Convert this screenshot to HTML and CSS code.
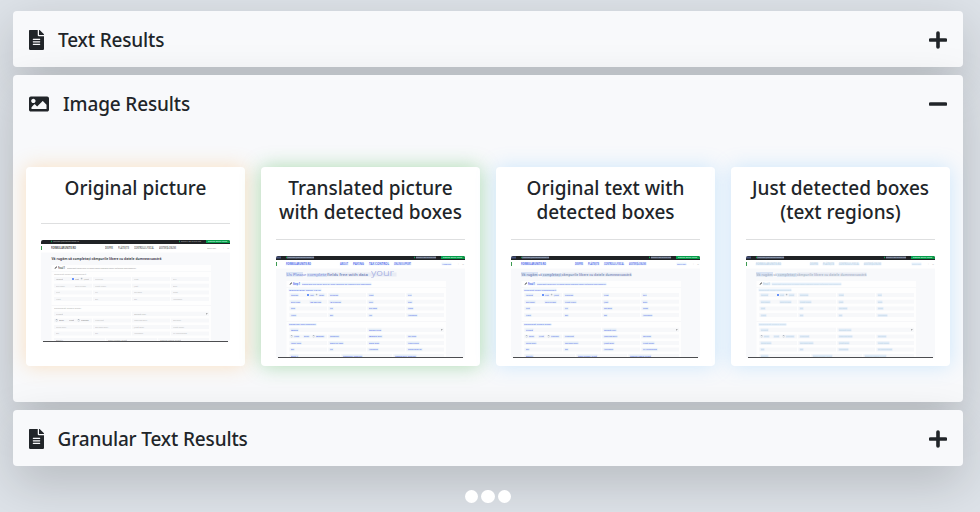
FILE: index.html
```html
<!DOCTYPE html>
<html lang="en">
<head>
<meta charset="utf-8">
<title>Results</title>
<link rel="stylesheet" href="styles.css">
</head>
<body>
<svg class="defs" aria-hidden="true">
  <symbol id="file" viewBox="0 0 384 512"><path d="M224 136V0H24C10.700 0 0 10.700 0 24v464c0 13.300 10.700 24 24 24h336c13.300 0 24-10.700 24-24V160H248c-13.200 0-24-10.800-24-24zm64 236c0 6.600-5.400 12-12 12H108c-6.600 0-12-5.400-12-12v-8c0-6.600 5.400-12 12-12h168c6.600 0 12 5.400 12 12zm0-64c0 6.600-5.400 12-12 12H108c-6.600 0-12-5.400-12-12v-8c0-6.600 5.400-12 12-12h168c6.600 0 12 5.400 12 12zm0-72v8c0 6.600-5.400 12-12 12H108c-6.600 0-12-5.400-12-12v-8c0-6.600 5.400-12 12-12h168c6.600 0 12 5.400 12 12zm96-114v6H256V0h6c6.400 0 12.500 2.500 17 7l98 98c4.500 4.500 7 10.600 7 17z"/></symbol>
  <symbol id="image" viewBox="0 0 512 512"><path d="M464 448H48c-26.500 0-48-21.500-48-48V112c0-26.500 21.500-48 48-48h416c26.500 0 48 21.500 48 48v288c0 26.500-21.500 48-48 48zM112 120c-30.900 0-56 25.100-56 56s25.100 56 56 56 56-25.100 56-56-25.100-56-56-56zM64 384h384V272l-87.500-87.500c-4.700-4.700-12.300-4.700-17 0L208 320l-55.500-55.500c-4.700-4.700-12.300-4.700-17 0L64 336z"/></symbol>
  <symbol id="plus" viewBox="0 0 18 18"><path d="M9 2v14M1.500 9h15"/></symbol>
  <symbol id="minus" viewBox="0 0 18 18"><path d="M1.500 9h15"/></symbol>
</svg>
<main class="results">
  <section class="panel">
    <header class="panel-head"><svg class="icon-file"><use href="#file"/></svg><h2 class="panel-title t-text">Text Results</h2><svg class="toggle"><use href="#plus"/></svg></header>
  </section>
  <section class="panel panel-open">
    <header class="panel-head"><svg class="icon-image"><use href="#image"/></svg><h2 class="panel-title t-image">Image Results</h2><svg class="toggle"><use href="#minus"/></svg></header>
    <div class="cards">
      <article class="card orange"><h3 class="card-title">Original picture</h3><hr><svg class="thumb" viewBox="0 0 189 102" data-kind="plain"></svg></article>
      <article class="card green"><h3 class="card-title">Translated picture<br>with detected boxes</h3><hr><svg class="thumb" viewBox="0 0 189 102" data-kind="translated"></svg></article>
      <article class="card blue"><h3 class="card-title">Original text with<br>detected boxes</h3><hr><svg class="thumb" viewBox="0 0 189 102" data-kind="original"></svg></article>
      <article class="card blue"><h3 class="card-title">Just detected boxes<br>(text regions)</h3><hr><svg class="thumb" viewBox="0 0 189 102" data-kind="boxes"></svg></article>
    </div>
  </section>
  <section class="panel">
    <header class="panel-head"><svg class="icon-file"><use href="#file"/></svg><h2 class="panel-title t-granular">Granular Text Results</h2><svg class="toggle"><use href="#plus"/></svg></header>
  </section>
</main>
<div class="dots"><i></i><i></i><i></i></div>
<script src="thumbs.js"></script>
</body>
</html>
```
FILE: styles.css
```css
* { box-sizing: border-box; }
body {
  margin: 0;
  height: 512px;
  overflow: hidden;
  padding: 11px 17px 0 13px;
  background: #dde2e8;
  color: #212529;
  font-family: "Noto Sans", "Open Sans", sans-serif;
}
.defs { position: absolute; width: 0; height: 0; }
.results { display: flex; flex-direction: column; gap: 8px; }
.panel {
  height: 56px;
  border-radius: 4px;
  background: #f8f9fb;
  box-shadow: 0 16px 48px rgba(0, 0, 0, .175);
}
.panel-open { height: 327px; }
.panel-head { display: flex; align-items: center; height: 56px; padding: 1px 16px 0; }
.panel-title { margin: 0; font-size: 19px; font-weight: 500; line-height: 24px; white-space: nowrap; padding-top: 1px; letter-spacing: -.15px; }
.t-text { margin-left: 14px; }
.t-image { margin-left: 14px; }
.t-granular { margin-left: 13.500px; }
.icon-file { width: 15px; height: 20px; fill: currentColor; }
.icon-image { width: 20px; height: 20px; fill: currentColor; }
.toggle { width: 18px; height: 18px; margin-left: auto; stroke: currentColor; stroke-width: 3.6; stroke-linecap: round; }
.cards { display: grid; grid-template-columns: repeat(4, 219px); gap: 16px; padding: 36px 13px 0; }
.card { height: 199px; padding: 9px 15px 8px; border-radius: 4px; background: #fff; }
.orange { box-shadow: 0 0 20px rgba(255, 165, 60, .3); }
.green { box-shadow: 0 0 20px rgba(40, 167, 50, .36); }
.blue { box-shadow: 0 0 20px rgba(80, 180, 255, .25); }
.card-title { min-height: 32px; margin: 0 -12px; font-size: 19px; font-weight: 500; line-height: 24px; text-align: center; white-space: nowrap; }
.card hr { height: 1px; margin: 15px 0 16px; border: 0; background: #dedfe0; }
.thumb { display: block; width: 189px; height: 102px; border-radius: 2px; }
.dots { display: flex; justify-content: center; gap: 3px; margin-top: 23.500px; }
.dots i { width: 13.400px; height: 13.400px; border-radius: 50%; background: #fff; }
```
FILE: thumbs.js
```js
const NS = 'http://www.w3.org/2000/svg';

// Each label: x, vertical centre, width, text, translated text, font size, weight, colour
const labels = [
  [10, 8, 25, 'FORMULARUNITE.RO', 'FORMULARUNITE.RO', 2.5, 700, '#222'],
  [64, 8, 8, 'DESPRE', 'ABOUT', 2.5, 600, '#444'],
  [77, 8, 11, 'PLĂTEȘTE', 'PAYING', 2.5, 600, '#555'],
  [93, 8, 20, 'CONTROLUL FISCAL', 'TAX CONTROL', 2.5, 600, '#444'],
  [118, 8, 17, 'ASISTENȚĂ ONLINE', 'ONLINE SUPPORT', 2.5, 600, '#444'],
  [166, 8, 9, 'Contul meu', 'Account', 2.3, 400, '#777'],
  [17, 28, 7, 'Pasul 1', 'Step 1', 2.6, 700, '#333'],
  [26, 28, 69, 'Completați formularul cu toate datele necesare pentru obținerea documentului', 'Complete the form with all data needed for getting the document', 2.3, 400, '#777'],
  [13, 34, 32, 'Completați datele dumneavoastră', 'Complete data your', 2.3, 400, '#999'],
  [13, 68.500, 27, 'Completați datele firmei', 'Complete data company', 2.3, 400, '#999'],
  [15, 39, 7, 'Persoană', 'Person', 2, 400, '#777'],
  [34, 39, 4, 'Fizică', 'Ind.', 2, 400, '#555'],
  [43, 39, 5, 'Juridică', 'Legal', 2, 400, '#777'],
  [54, 39, 8, 'Prenume', 'Surname', 2, 400, '#aaa'],
  [93, 39, 4.500, 'Nume', 'Name', 2, 400, '#aaa'],
  [132, 39, 3.500, 'CNP', 'PIN', 2, 400, '#aaa'],
  [15, 46, 9, 'Data nașterii', 'Birth date', 2, 400, '#aaa'],
  [34, 46, 11, 'Serie buletin', 'ID series', 2, 400, '#aaa'],
  [54, 46, 11, 'Număr buletin', 'ID number', 2, 400, '#aaa'],
  [93, 46, 4, 'Județ', 'County', 2, 400, '#aaa'],
  [132, 46, 4, 'Oraș', 'City', 2, 400, '#aaa'],
  [15, 52.500, 4, 'Stradă', 'Street', 2, 400, '#aaa'],
  [54, 52.500, 3, 'Nr.', 'No.', 2, 400, '#aaa'],
  [93, 52.500, 8, 'Cod poștal', 'Zip code', 2, 400, '#aaa'],
  [132, 52.500, 5, 'Telefon', 'Phone', 2, 400, '#aaa'],
  [15, 59.500, 5, 'Număr', 'Number', 2, 400, '#aaa'],
  [54, 59.500, 3, 'Bloc', 'Bloc', 2, 400, '#aaa'],
  [93, 59.500, 3, 'Etaj', 'Floor', 2, 400, '#aaa'],
  [132, 59.500, 9, 'Apartament', 'Apartment', 2, 400, '#aaa'],
  [15, 74, 7, 'Firmă', 'Office', 2, 400, '#999'],
  [93, 74, 12, 'Selectați tipul', 'Select type', 2, 400, '#999'],
  [18, 80.500, 5, 'Sediu', 'Head', 2, 400, '#555'],
  [28, 80.500, 5, 'Filială', 'Branch', 2, 400, '#555'],
  [40, 80.500, 8, 'Proprietar', 'Owner', 2, 400, '#555'],
  [54, 80.500, 9, 'Nume firmă', 'Company', 2, 400, '#aaa'],
  [93, 80.500, 13, 'Localitate sediu', 'Office city', 2, 400, '#aaa'],
  [132, 80.500, 8, 'Cod fiscal', 'Tax code', 2, 400, '#aaa'],
  [15, 87, 10, 'Strada sediu', 'Main road', 2, 400, '#aaa'],
  [54, 87, 13, 'Cod poștal sediu', 'Office zip code', 2, 400, '#aaa'],
  [93, 87, 10, 'Județ sediu', 'Office state', 2, 400, '#aaa'],
  [132, 87, 11, 'Număr telefon', 'Phone number', 2, 400, '#aaa'],
  [15, 93.500, 3, 'Bloc', 'Bloc', 2, 400, '#aaa'],
  [54, 93.500, 3, 'Etaj', 'No.', 2, 400, '#aaa'],
  [93, 93.500, 9, 'Apartament', 'Apartment', 2, 400, '#aaa'],
  [132, 93.500, 14, 'Nr. înregistrare', 'Registration no.', 2, 400, '#aaa'],
  [15, 100, 7, 'Bancă *', 'Bank *', 2, 400, '#777'],
  [67, 100, 19, 'Cont bancar firmă', 'Company account', 2, 400, '#888'],
  [119, 100, 21, 'Capital social firmă', 'Company capital', 2, 400, '#888']
];

document.querySelectorAll('.thumb').forEach(svg => {
  const kind = svg.dataset.kind;
  const boxed = kind !== 'plain';
  const inked = kind === 'translated' || kind === 'original';
  const add = (name, attrs, text) => {
    const el = document.createElementNS(NS, name);
    for (const key in attrs) el.setAttribute(key, attrs[key]);
    if (text) el.textContent = text;
    svg.append(el);
  };
  const rect = (x, y, width, height, fill, opacity = 1) => add('rect', { x, y, width, height, fill, opacity });
  const write = (x, y, w, text, size, weight, fill, opacity = 1) => add('text', {
    x, y: y + size * .36, textLength: w, lengthAdjust: 'spacingAndGlyphs',
    'font-size': size, 'font-weight': weight, fill, opacity
  }, text);

  rect(0, 0, 189, 102, '#f8f9fb');
  rect(0, 4, 189, 8.500, '#fff');
  rect(0, 0, 189, 4, '#202225');
  rect(165, 0, 24, 3, '#079c4a');
  rect(0, 6, 1, 4, '#3c9a51');
  rect(10, .7, 1, 1.500, '#16a052');
  rect(138, .7, 1, 1.500, '#16a052');
  write(12, 1.600, 26, 'contact@formularunite.ro', 2.2, 400, '#bbb');
  write(140, 1.600, 20, 'Suport: 0312 345 678', 2.2, 400, '#bbb');
  write(167, 1.600, 19, 'Depune online acum', 2.2, 600, '#d6ffe6');
  if (boxed) {
    rect(0, .5, 5, 2, '#7f9cff', .4);
    rect(11, .5, 27, 2, '#a9bfe8', .55);
    rect(140, .5, 20, 2, '#a9bfe8', .5);
  }
  write(182, 8, 1, '♡', 2, 400, '#999');
  write(186, 8, 2, '⌕', 2, 400, '#999');

  rect(10.500, 25, 159.500, 77, '#fefefe');
  rect(10.500, 31, 159.500, .4, '#f0f1f4');
  rect(10.500, 65.500, 159.500, .5, '#f0f1f4');
  for (const y of [37, 43.700, 50.400, 57, 78.500, 85, 91.600])
    for (const x of [13, 52, 91, 130]) rect(x, y, 38, 4, '#f7f8fa');
  for (const x of [13, 91]) rect(x, 71.700, 77, 4.200, '#f7f8fa');
  for (const x of [13, 65, 117]) rect(x, 98, 51, 4, '#f7f8fa');

  if (boxed) {
    rect(10, 16, 17, 4.500, '#a9c3ea', .4);
    rect(31, 17, 20, 4, '#a9c3ea', .32);
    rect(51, 16.500, 69.500, 4, '#b8c9e4', .25);
  }
  if (kind === 'translated') {
    write(10.500, 19, 40, 'Us Please complete', 4, 400, '#4450c8', .7);
    write(51, 18.500, 41, 'fields free with data', 4, 600, '#5264a6', .75);
    write(95, 17, 23, 'your', 8.500, 300, '#8792d8', .75);
  } else {
    write(10.500, 18.500, 110, 'Vă rugăm să completați câmpurile libere cu datele dumneavoastră', 3.900, 700,
      kind === 'plain' ? '#30323d' : kind === 'original' ? '#6476a9' : '#9caabd', kind === 'plain' ? .9 : .7);
  }

  add('path', { d: 'M13.500 29l.5-1.200 1.700-1.500.5.6-1.600 1.500z', fill: '#555' });
  for (const [x, y, w, ro, en, size, weight, color] of labels) {
    if (boxed) rect(x - .4, y - 1.300, w + .8, 2.600, '#a5cdf2', inked ? .24 : .3);
    const fill = inked ? '#3149e8' : boxed ? '#a5bed6' : color;
    write(x, y, w, kind === 'translated' ? en : ro, size, weight, fill, inked ? .8 : boxed ? .5 : .8);
  }
  rect(31, 38, 2, 2, '#6893fa');
  for (const [x, y] of [[40, 38], [15, 79.500], [37, 79.500]])
    add('rect', { x, y, width: 1.800, height: 1.800, fill: 'none', stroke: '#aab2bf', 'stroke-width': .3 });
  add('path', { d: 'M165 73.500h1.600l-.8 1z', fill: '#444' });
  rect(2, 101, 185, 1, '#4c4d50');
});
```
